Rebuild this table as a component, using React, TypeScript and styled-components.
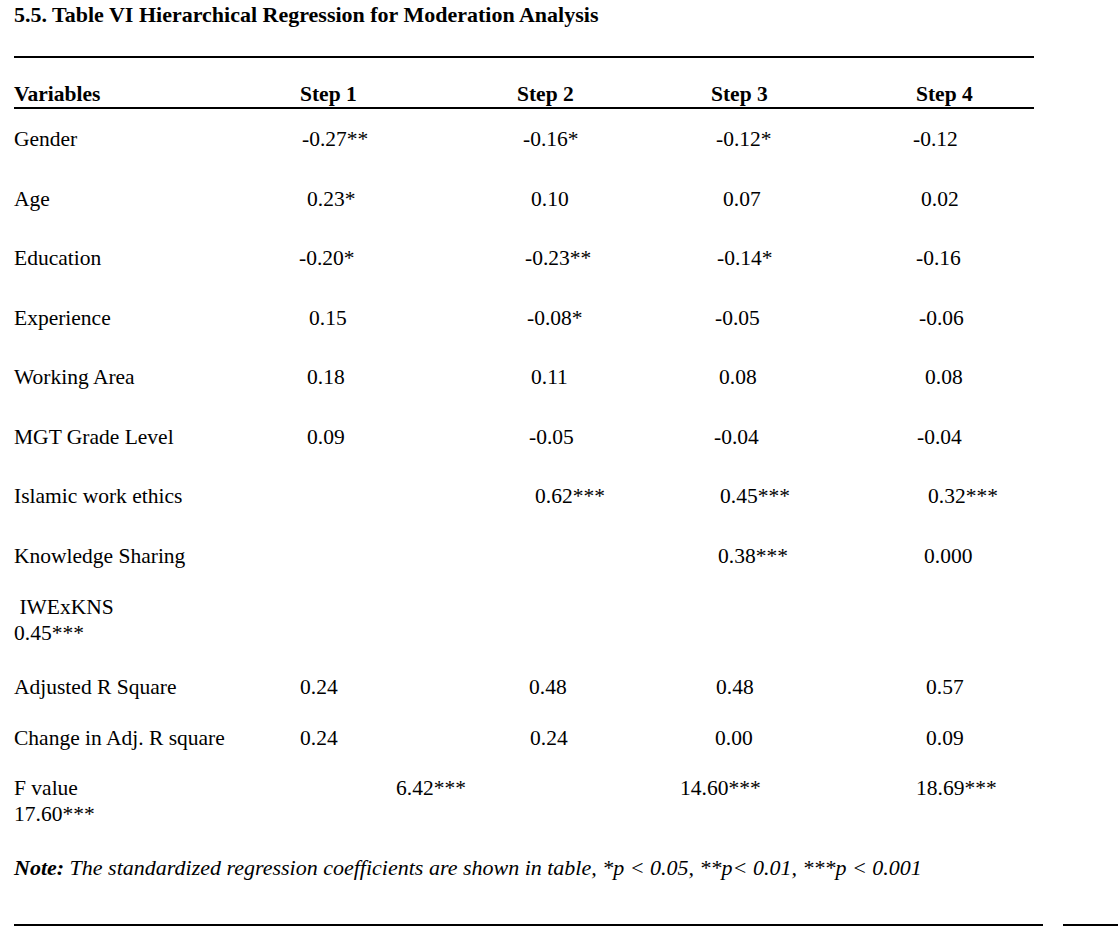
import React from "react";
import styled, { createGlobalStyle } from "styled-components";

const GlobalStyle = createGlobalStyle`
  html, body {
    margin: 0;
    padding: 0;
    background: #ffffff;
  }
  body {
    font-family: "Liberation Serif", "Times New Roman", serif;
    color: #000000;
  }
`;

const Page = styled.div`
  width: 1118px;
  height: 938px;
  padding: 2px 0 0 14px;
  box-sizing: border-box;
  overflow: hidden;
`;

const Title = styled.h1`
  margin: 0;
  font-size: 22px;
  font-weight: 700;
  line-height: 26px;
  white-space: nowrap;
`;

const Rule = styled.div<{ $width: number; $top: number }>`
  width: ${(p) => p.$width}px;
  height: 2px;
  margin-top: ${(p) => p.$top}px;
  background: #000000;
`;

const Grid = styled.div<{ $height: number; $top?: number }>`
  display: grid;
  grid-template-columns: 282px 220px 194px 200px 1fr;
  height: ${(p) => p.$height}px;
  margin-top: ${(p) => p.$top ?? 0}px;
  font-size: 21.5px;
  line-height: 26px;
  white-space: nowrap;
`;

const HeadCell = styled.div<{ $shift?: number }>`
  padding-left: ${(p) => p.$shift ?? 0}px;
  font-weight: 700;
`;

const Cell = styled.div<{ $shift?: number }>`
  padding-left: ${(p) => p.$shift ?? 0}px;
`;

const Wrapped = styled.div<{ $shift?: number }>`
  padding-left: ${(p) => p.$shift ?? 0}px;
`;

const Note = styled.p`
  margin: 0;
  font-size: 22px;
  line-height: 26px;
  font-style: italic;
  white-space: nowrap;
`;

const NoteLead = styled.b`
  font-weight: 700;
`;

const Footer = styled.div`
  display: flex;
  gap: 20px;
  margin-top: 43px;
`;

const FooterRule = styled.div<{ $width: number }>`
  flex-shrink: 0;
  width: ${(p) => p.$width}px;
  height: 2px;
  background: #000000;
`;

type Value = { text: string; shift: number } | null;

type Row = {
  label: string;
  values: Value[];
  height: number;
};

const v = (text: string, shift: number): Value => ({ text, shift });

const rows: Row[] = [
  { label: "Gender", height: 59.5, values: [v("-0.27**", 6), v("-0.16*", 7), v("-0.12*", 6), v("-0.12", 3)] },
  { label: "Age", height: 59.5, values: [v("0.23*", 11), v("0.10", 15), v("0.07", 13), v("0.02", 11)] },
  { label: "Education", height: 59.5, values: [v("-0.20*", 3), v("-0.23**", 9), v("-0.14*", 7), v("-0.16", 6)] },
  { label: "Experience", height: 59.5, values: [v("0.15", 13), v("-0.08*", 11), v("-0.05", 5), v("-0.06", 9)] },
  { label: "Working Area", height: 59.5, values: [v("0.18", 11), v("0.11", 15), v("0.08", 9), v("0.08", 15)] },
  { label: "MGT Grade Level", height: 59.5, values: [v("0.09", 11), v("-0.05", 13), v("-0.04", 4), v("-0.04", 7)] },
  { label: "Islamic work ethics", height: 59.5, values: [null, v("0.62***", 19), v("0.45***", 10), v("0.32***", 18)] },
  { label: "Knowledge Sharing", height: 51, values: [null, null, v("0.38***", 8), v("0.000", 14)] },
];

const tail: Row[] = [
  { label: "Adjusted R Square", height: 51, values: [v("0.24", 4), v("0.48", 13), v("0.48", 6), v("0.57", 16)] },
  { label: "Change in Adj. R square", height: 50, values: [v("0.24", 4), v("0.24", 14), v("0.00", 5), v("0.09", 16)] },
];

const BodyRow: React.FC<{ row: Row; top?: number }> = ({ row, top }) => (
  <Grid $height={row.height} $top={top}>
    <Cell>{row.label}</Cell>
    {row.values.map((val, i) => (
      <Cell key={i} $shift={val?.shift}>
        {val?.text}
      </Cell>
    ))}
  </Grid>
);

export default function App() {
  return (
    <>
      <GlobalStyle />
      <Page>
        <Title>5.5. Table VI Hierarchical Regression for Moderation Analysis</Title>
        <Rule $width={1020} $top={28} />

        <Grid $height={26} $top={23}>
          <HeadCell>Variables</HeadCell>
          <HeadCell $shift={4}>Step 1</HeadCell>
          <HeadCell $shift={1}>Step 2</HeadCell>
          <HeadCell $shift={1}>Step 3</HeadCell>
          <HeadCell $shift={6}>Step 4</HeadCell>
        </Grid>
        <Rule $width={1020} $top={0} />

        {rows.map((row, i) => (
          <BodyRow key={row.label} row={row} top={i === 0 ? 17 : 0} />
        ))}

        <Grid $height={80}>
          <Wrapped>
            <div>&nbsp;IWExKNS</div>
            <div>0.45***</div>
          </Wrapped>
        </Grid>

        {tail.map((row) => (
          <BodyRow key={row.label} row={row} />
        ))}

        <Grid $height={80}>
          <Wrapped>
            <div>F value</div>
            <div>17.60***</div>
          </Wrapped>
          <Cell $shift={100}>6.42***</Cell>
          <Cell $shift={164}>14.60***</Cell>
          <Cell />
          <Cell $shift={6}>18.69***</Cell>
        </Grid>

        <Note>
          <NoteLead>Note:</NoteLead> The standardized regression coefficients are shown in table, *p &lt; 0.05, **p&lt; 0.01, ***p &lt; 0.001
        </Note>

        <Footer>
          <FooterRule $width={1029} />
          <FooterRule $width={60} />
        </Footer>
      </Page>
    </>
  );
}
